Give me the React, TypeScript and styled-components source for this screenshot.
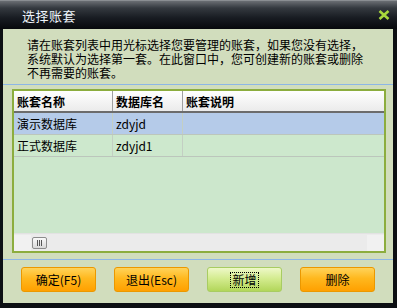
import React from 'react'
import styled, { createGlobalStyle } from 'styled-components'

const Global = createGlobalStyle`
  html, body { margin: 0; padding: 0; background: #000; }
  body { font-family: "Noto Sans CJK SC", "DejaVu Sans", sans-serif; }
`

const Frame = styled.div`
  width: 397px;
  height: 308px;
  box-sizing: border-box;
  background: #0c0f13;
  display: flex;
  flex-direction: column;
  overflow: hidden;
`

const TitleBar = styled.div`
  height: 29px;
  flex: none;
  display: flex;
  align-items: center;
  justify-content: space-between;
  padding: 0 7px 0 22px;
  background: linear-gradient(to bottom, #6a6e73 0%, #34393f 25%, #181c22 60%, #07090c 100%);
  border-top: 1px solid #8a8e92;
  box-sizing: border-box;
`

const Title = styled.span`
  color: #eef4fb;
  font-size: 13px;
  letter-spacing: 0.5px;
  margin-top: 1px;
`

const Body = styled.div`
  flex: 1;
  margin: 0 4px 5px 3px;
  background: #d1ddbd;
  display: flex;
  flex-direction: column;
`

const Intro = styled.div`
  padding: 10px 0 0 24px;
  font-family: "Liberation Sans", "Noto Sans CJK SC", sans-serif;
  font-size: 12px;
  line-height: 14px;
  color: #000;
  box-sizing: border-box;
  height: 55px;
`

const Line = styled.div`
  white-space: nowrap;
`

const Divider = styled.div<{ $top: number }>`
  height: 1px;
  background: #8db6e6;
  margin-top: ${p => p.$top}px;
`

const Grid = styled.div`
  margin: 4px 7px 0 9px;
  height: 164px;
  box-sizing: border-box;
  border: 2px solid #8cad3e;
  background: #cce7cc;
  display: flex;
  flex-direction: column;
`

const Row = styled.div<{ $bg: string; $head?: boolean }>`
  display: grid;
  grid-template-columns: 99px 70px 1fr;
  height: 22px;
  box-sizing: border-box;
  background: ${p => p.$bg};
  border-bottom: ${p => (p.$head ? '2px solid #6c6c6c' : '1px solid #bcc6bc')};
  font-size: 12px;
  font-weight: ${p => (p.$head ? 700 : 400)};
`

const Cell = styled.div<{ $head?: boolean }>`
  display: flex;
  align-items: center;
  padding-left: 3px;
  border-right: 1px solid ${p => (p.$head ? '#a0a0a0' : '#c3cfc3')};
  color: #000;
  white-space: nowrap;
  &:last-child { border-right: none; }
`

const Fill = styled.div`
  flex: 1;
`

const HScroll = styled.div`
  height: 17px;
  background: #ebebeb;
  display: flex;
  align-items: center;
  border-top: 1px solid #e2e2e2;
`

const ScrollEnd = styled.div`
  width: 17px;
  height: 16px;
  background: #f1f1f1;
`

const Thumb = styled.div`
  width: 15px;
  height: 12px;
  margin-left: 1px;
  box-sizing: border-box;
  border: 1px solid #8c8c8c;
  border-radius: 2px;
  background: linear-gradient(to bottom, #fafafa, #d8d8d8);
  display: flex;
  align-items: center;
  justify-content: center;
  gap: 1px;
  span {
    width: 1px;
    height: 6px;
    background: #555;
  }
`

const Track = styled.div`
  flex: 1;
`

const Buttons = styled.div`
  display: flex;
  margin-top: 7px;
  padding-left: 18px;
  gap: 18px;
`

const Button = styled.button<{ $green?: boolean }>`
  width: 75px;
  height: 25px;
  padding: 0;
  border-radius: 3px;
  font-family: "Noto Sans CJK SC", "DejaVu Sans", sans-serif;
  font-size: 12px;
  color: #000;
  border: 1px solid ${p => (p.$green ? '#a8cc62' : '#eb9800')};
  background: ${p =>
    p.$green
      ? 'linear-gradient(to bottom, #eef8c8 0%, #d4ec90 45%, #b2d65a 100%)'
      : 'linear-gradient(to bottom, #ffd35a 0%, #ffb81e 45%, #ffa000 100%)'};
  display: flex;
  align-items: center;
  justify-content: center;
`

const Focus = styled.span`
  outline: 1px dotted #000;
  padding: 0 1px;
  line-height: 14px;
`

const rows = [
  { name: '演示数据库', db: 'zdyjd', bg: '#b5cbe9' },
  { name: '正式数据库', db: 'zdyjd1', bg: '#cde8cd' },
]

export default function App() {
  return (
    <Frame>
      <Global />
      <TitleBar>
        <Title>选择账套</Title>
        <svg width="12" height="10" viewBox="0 0 12 10">
          <path d="M1.5 1 L10.5 9 M10.5 1 L1.5 9" stroke="#a8d83c" strokeWidth="2.6" />
        </svg>
      </TitleBar>
      <Body>
        <Intro>
          <Line>请在账套列表中用光标选择您要管理的账套，如果您没有选择，</Line>
          <Line>系统默认为选择第一套。在此窗口中，您可创建新的账套或删除</Line>
          <Line>不再需要的账套。</Line>
        </Intro>
        <Divider $top={0} />
        <Grid>
          <Row $head $bg="linear-gradient(to bottom, #ffffff, #ebebeb)">
            <Cell $head>账套名称</Cell>
            <Cell $head>数据库名</Cell>
            <Cell $head>账套说明</Cell>
          </Row>
          {rows.map(r => (
            <Row key={r.db} $bg={r.bg}>
              <Cell>{r.name}</Cell>
              <Cell>{r.db}</Cell>
              <Cell />
            </Row>
          ))}
          <Fill />
          <HScroll>
            <ScrollEnd />
            <Thumb>
              <span />
              <span />
              <span />
            </Thumb>
            <Track />
            <ScrollEnd />
          </HScroll>
        </Grid>
        <Divider $top={6} />
        <Buttons>
          <Button>确定(F5)</Button>
          <Button>退出(Esc)</Button>
          <Button $green>
            <Focus>新增</Focus>
          </Button>
          <Button>删除</Button>
        </Buttons>
      </Body>
    </Frame>
  )
}
